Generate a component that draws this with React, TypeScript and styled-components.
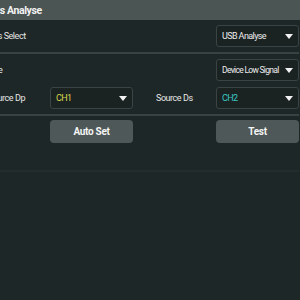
import React from "react";
import styled, { createGlobalStyle } from "styled-components";

const Global = createGlobalStyle`
  html, body { margin: 0; padding: 0; background: #1e2727; }
  body { font-family: Roboto, "Liberation Sans", sans-serif; }
`;

const Screen = styled.div`
  width: 300px;
  height: 300px;
  overflow: hidden;
  background: #1e2727;
  display: flex;
  flex-direction: column;
`;

const Header = styled.div`
  height: 20px;
  flex: none;
  background: #4b5554;
  display: flex;
  align-items: center;
`;

const Title = styled.div`
  margin-left: -12px;
  color: #f2f2f2;
  font-weight: 700;
  font-size: 10.5px;
  letter-spacing: -0.4px;
  white-space: nowrap;
`;

const Body = styled.div`
  margin-left: -12px;
  width: 311px;
  display: flex;
  flex-direction: column;
`;

const Section = styled.div<{ $pad: number }>`
  display: grid;
  grid-template-columns: 62px 83px 23px 60px 83px;
  grid-auto-rows: 22px;
  row-gap: 6px;
  align-items: center;
  padding: ${(p) => p.$pad}px 0;
`;

const Divider = styled.div<{ $faint?: boolean }>`
  height: 2px;
  background: ${(p) => (p.$faint ? "#232d2d" : "#384242")};
  width: 100%;
`;

const Label = styled.div<{ $shift?: number }>`
  color: #e6e6e6;
  font-size: 9px;
  letter-spacing: -0.45px;
  white-space: nowrap;
  margin-left: ${(p) => p.$shift ?? 0}px;
`;

const Select = styled.div<{ $col: number; $color: string; $tight?: boolean }>`
  grid-column: ${(p) => p.$col};
  height: 22px;
  box-sizing: border-box;
  border: 1px solid #3a4444;
  border-radius: 3px;
  background: #1a2222;
  display: flex;
  align-items: center;
  justify-content: space-between;
  padding: 0 5px 0 5px;
  color: ${(p) => p.$color};
  font-size: ${(p) => (p.$tight ? 8.5 : 9)}px;
  letter-spacing: ${(p) => (p.$tight ? -0.7 : -0.6)}px;
  white-space: nowrap;
`;

const Arrow = styled.svg`
  flex: none;
  width: 8px;
  height: 5px;
`;

const Button = styled.div<{ $col: number }>`
  grid-column: ${(p) => p.$col};
  height: 23px;
  box-sizing: border-box;
  background: #4e5858;
  border-radius: 4px;
  color: #f4f4f4;
  font-size: 10px;
  font-weight: 700;
  letter-spacing: -0.3px;
  display: flex;
  align-items: center;
  justify-content: center;
`;

const ButtonRow = styled.div`
  display: grid;
  grid-template-columns: 62px 83px 23px 60px 83px;
  padding: 4px 0 27px;
`;

const Tri = () => (
  <Arrow viewBox="0 0 8 5">
    <path d="M0 0 H8 L4 5 Z" fill="#f2f2f2" />
  </Arrow>
);

export default function App() {
  return (
    <>
      <Global />
      <Screen>
        <Header>
          <Title>Bus Analyse</Title>
        </Header>
        <Body>
          <Section $pad={5}>
            <Label>Bus Select</Label>
            <Select $col={5} $color="#ececec">
              <span>USB Analyse</span>
              <Tri />
            </Select>
          </Section>
          <Divider />
          <Section $pad={5}>
            <Label $shift={-3}>Type</Label>
            <Select $col={5} $color="#ececec" $tight>
              <span>Device Low Signal</span>
              <Tri />
            </Select>
            <Label>Source Dp</Label>
            <Select $col={2} $color="#d6d84e">
              <span>CH1</span>
              <Tri />
            </Select>
            <span />
            <Label>Source Ds</Label>
            <Select $col={5} $color="#3cc8c4">
              <span>CH2</span>
              <Tri />
            </Select>
          </Section>
          <Divider />
          <ButtonRow>
            <Button $col={2}>Auto Set</Button>
            <Button $col={5}>Test</Button>
          </ButtonRow>
          <Divider $faint />
        </Body>
      </Screen>
    </>
  );
}
